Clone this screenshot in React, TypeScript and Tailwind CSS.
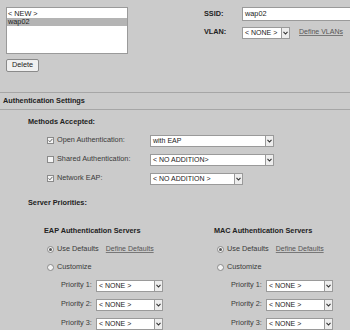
import React from 'react';

const FONT = { fontFamily: '"Liberation Sans", Arial, sans-serif' };

function Chevron() {
  return (
    <svg width="5" height="4" viewBox="0 0 5 4" className="block">
      <polyline points="0.5,0.8 2.5,3 4.5,0.8" fill="none" stroke="#333" strokeWidth="1.1" />
    </svg>
  );
}

// boxClass sets the width of the white text box; the arrow button is 9px
function Select({ value, boxClass }: { value: string; boxClass: string }) {
  return (
    <div className="flex h-[12px] flex-none">
      <div
        className={
          'flex h-[12px] flex-none items-center overflow-hidden whitespace-nowrap border border-r-0 border-[#9a9a9a] bg-white pl-[2px] text-[7px] leading-none text-[#222] ' +
          boxClass
        }
      >
        {value}
      </div>
      <div className="flex h-[12px] w-[9px] flex-none items-center justify-center border border-[#9a9a9a] bg-[#ededed]">
        <Chevron />
      </div>
    </div>
  );
}

function Checkbox({ checked }: { checked: boolean }) {
  return (
    <div className="flex h-[7px] w-[7px] shrink-0 items-center justify-center border border-[#8a8a8a] bg-[#f4f4f4]">
      {checked && (
        <svg width="5" height="5" viewBox="0 0 5 5" className="block">
          <polyline points="0.6,2.4 1.9,3.8 4.4,0.9" fill="none" stroke="#555" strokeWidth="0.9" />
        </svg>
      )}
    </div>
  );
}

function Radio({ checked }: { checked: boolean }) {
  return (
    <div className="flex h-[7px] w-[7px] shrink-0 items-center justify-center rounded-full border border-[#8a8a8a] bg-[#f4f4f4]">
      {checked && <div className="h-[3px] w-[3px] rounded-full bg-[#555]" />}
    </div>
  );
}

function Link({ children }: { children: React.ReactNode }) {
  return <span className="text-[7px] text-[#555] underline decoration-[#777]">{children}</span>;
}

function MethodRow({ label, checked, children }: { label: string; checked: boolean; children: React.ReactNode }) {
  return (
    <div className="flex h-[19px] items-center pl-[19px]">
      <Checkbox checked={checked} />
      <span className="ml-[3px] w-[93px] shrink-0">{label}</span>
      {children}
    </div>
  );
}

function ServerColumn({ title }: { title: string }) {
  return (
    <div className="w-[170px] shrink-0">
      <div className="flex h-[12px] items-center font-bold text-[#222]">{title}</div>
      <div className="mt-[3px] flex h-[18px] items-center pl-[3px]">
        <Radio checked />
        <span className="ml-[3px] mr-[7px]">Use Defaults</span>
        <Link>Define Defaults</Link>
      </div>
      <div className="flex h-[18px] items-center pl-[3px]">
        <Radio checked={false} />
        <span className="ml-[3px]">Customize</span>
      </div>
      {[1, 2, 3].map((n) => (
        <div key={n} className="flex h-[19px] items-center pl-[17px]">
          <span className="w-[35px] shrink-0">Priority {n}:</span>
          <Select value="< NONE >" boxClass="w-[58px]" />
        </div>
      ))}
    </div>
  );
}

export default function App() {
  return (
    <div
      className="h-[330px] w-[350px] overflow-hidden bg-[#cbcbcb] text-[7.3px] text-[#3a3a3a]"
      style={FONT}
    >
      {/* top: list + ssid/vlan */}
      <div className="flex h-[92px] pl-[6px] pt-[7px]">
        <div className="w-[122px] shrink-0">
          <div className="h-[47px] border border-[#9a9a9a] bg-white pt-[2px] text-[#222]">
            <div className="flex h-[8px] items-center pl-[1px]">&lt; NEW &gt;</div>
            <div className="flex h-[8px] items-center bg-[#b4b4b4] pl-[1px]">wap02</div>
          </div>
          <div className="mt-[5px] flex h-[13px] w-[33px] items-center justify-center rounded-[2px] border border-[#8a8a8a] bg-[#f0f0f0] text-[#222]">
            Delete
          </div>
        </div>
        <div className="ml-[76px] flex-1">
          <div className="flex h-[14px] items-center">
            <span className="w-[38px] shrink-0 font-bold text-[#222]">SSID:</span>
            <div className="flex h-[14px] flex-1 items-center border border-r-0 border-[#9a9a9a] bg-white pl-[2px] text-[#222]">
              wap02
            </div>
          </div>
          <div className="mt-[6px] flex h-[11px] items-center">
            <span className="w-[38px] shrink-0 font-bold text-[#222]">VLAN:</span>
            <Select value="< NONE >" boxClass="w-[39px]" />
            <span className="ml-[9px]">
              <Link>Define VLANs</Link>
            </span>
          </div>
        </div>
      </div>

      {/* section header */}
      <div className="flex h-[18px] items-center border-y border-[#a6a6a6] pl-[3px] font-bold text-[#222]">
        Authentication Settings
      </div>

      {/* methods */}
      <div className="pl-[28px]">
        <div className="mt-[6px] flex h-[12px] items-center font-bold text-[#222]">Methods Accepted:</div>
        <div className="mt-[3px]">
          <MethodRow label="Open Authentication:" checked>
            <Select value="with EAP" boxClass="w-[115px]" />
          </MethodRow>
          <MethodRow label="Shared Authentication:" checked={false}>
            <Select value="< NO ADDITION>" boxClass="w-[115px]" />
          </MethodRow>
          <MethodRow label="Network EAP:" checked>
            <Select value="< NO ADDITION >" boxClass="w-[84px]" />
          </MethodRow>
        </div>
        <div className="mt-[9px] flex h-[12px] items-center font-bold text-[#222]">Server Priorities:</div>
      </div>

      {/* servers */}
      <div className="mt-[16px] flex pl-[44px]">
        <ServerColumn title="EAP Authentication Servers" />
        <ServerColumn title="MAC Authentication Servers" />
      </div>
    </div>
  );
}
